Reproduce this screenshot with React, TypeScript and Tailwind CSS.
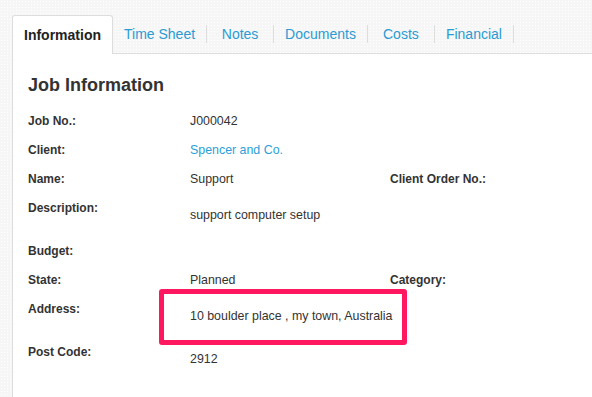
import React from "react";

const tabs = ["Time Sheet", "Notes", "Documents", "Costs", "Financial"];

type Row = {
  label: string;
  value?: string;
  link?: boolean;
  tall?: boolean;
  label2?: string;
};

const rows: Row[] = [
  { label: "Job No.:", value: "J000042" },
  { label: "Client:", value: "Spencer and Co.", link: true },
  { label: "Name:", value: "Support", label2: "Client Order No.:" },
  { label: "Description:", value: "support computer setup", tall: true },
  { label: "Budget:" },
  { label: "State:", value: "Planned", label2: "Category:" },
  { label: "Address:", value: "10 boulder place , my town, Australia", tall: true },
  { label: "Post Code:", value: "2912", tall: true },
];

export default function App() {
  return (
    <div
      className="relative h-[397px] w-[592px] overflow-hidden bg-[#f6f6f6] bg-[radial-gradient(#ffffff_0.8px,transparent_0.8px)] bg-[length:3px_3px] pl-[12px] pt-[15px]"
      style={{ fontFamily: '"Liberation Sans", Arial, sans-serif' }}
    >
      {/* tab strip */}
      <div className="flex items-end border-b border-[#dddddd]">
        <div className="-mb-px flex h-[39px] items-center rounded-t-[3px] border border-b-0 border-[#dddddd] bg-white px-[11px] text-[14px] font-bold text-[#222222]">
          Information
        </div>
        {tabs.map((t) => (
          <div key={t} className="flex h-[38px] items-center">
            <span className="min-w-[66px] whitespace-nowrap px-[11px] text-center text-[14px] text-[#2a9bd3]">{t}</span>
            <span className="h-[18px] w-px bg-[#dddddd]" />
          </div>
        ))}
      </div>

      {/* panel */}
      <div className="h-full border-l border-[#dddddd] bg-white pl-[15px] pt-[19px]">
        <h2 className="mb-[10px] text-[18px] font-bold leading-[24px] text-[#333333]">Job Information</h2>
        <div className="flex flex-col">
          {rows.map((r) => (
            <div key={r.label} className="flex items-start whitespace-nowrap">
              <div className="w-[162px] shrink-0 text-[12px] font-bold leading-[29px] text-[#333333]">{r.label}</div>
              <div
                className={`w-[200px] shrink-0 text-[12.4px] leading-[29px] ${r.tall ? "py-[7px]" : ""} ${
                  r.link ? "text-[#2a9fd8]" : "text-[#333333]"
                }`}
              >
                {r.value ?? "\u00a0"}
              </div>
              {r.label2 && (
                <div className="text-[12px] font-bold leading-[29px] text-[#333333]">{r.label2}</div>
              )}
            </div>
          ))}
        </div>
      </div>

      {/* annotation highlight */}
      <div className="absolute left-[159px] top-[289px] h-[56px] w-[248px] rounded-[3px] border-[5px] border-[#ff1760]" />
    </div>
  );
}
